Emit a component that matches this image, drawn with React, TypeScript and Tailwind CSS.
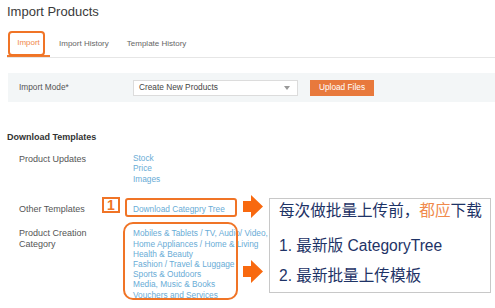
import React from "react";

const Arrow = ({ className }: { className: string }) => (
  <svg className={className} width="20" height="23" viewBox="0 0 20 23">
    <path d="M0 6 H8 V0 L20 11.5 L8 23 V17 H0 Z" fill="#f8690f" />
  </svg>
);

export default function App() {
  const cats = [
    "Mobiles & Tablets / TV, Audio/ Video, Cameras",
    "Home Appliances / Home & Living",
    "Health & Beauty",
    "Fashion / Travel & Luggage",
    "Sports & Outdoors",
    "Media, Music & Books",
    "Vouchers and Services",
  ];
  return (
    <div className="relative w-[495px] h-[308px] overflow-hidden bg-white font-['Liberation_Sans',Arial,sans-serif] text-[#555]">
      <div className="pt-[4px] pl-[7px] text-[13px] leading-[16px] text-[#3a3a3a]">Import Products</div>

      {/* tabs */}
      <div className="ml-[7px] mt-[11px] flex h-[27px] items-stretch border-b border-[#e6e6e6] text-[8px] text-[#666]">
        <div className="flex w-[43px] items-center justify-center border-b-2 border-[#f07b2f] text-[#f0874a]">Import</div>
        <div className="ml-[9px] flex items-center">Import History</div>
        <div className="ml-[18px] flex items-center">Template History</div>
      </div>

      {/* import mode panel */}
      <div className="ml-[8px] mt-[15px] flex h-[29px] items-center bg-[#f3f6f7] pl-[11px] text-[8.3px] text-[#555]">
        <div className="w-[114px]">Import Mode*</div>
        <div className="flex h-[16px] w-[165px] items-center justify-between border border-[#dcdcdc] bg-white pl-[5px] pr-[7px] text-[#444]">
          <span>Create New Products</span>
          <svg width="6" height="4" viewBox="0 0 6 4">
            <path d="M0 0 H6 L3 4 Z" fill="#999" />
          </svg>
        </div>
        <div className="ml-[12px] flex h-[16px] w-[64px] items-center justify-center bg-[#e8793c] text-white">Upload Files</div>
      </div>

      {/* download templates */}
      <div className="ml-[7px] mt-[29.5px] text-[9px] font-bold leading-[11px] text-[#333]">Download Templates</div>

      <div className="ml-[19px] text-[9px] leading-[11px]">
        <div className="mt-[10px] flex">
          <div className="w-[114px] pt-[1.5px]">Product Updates</div>
          <div className="flex flex-col text-[8.3px] leading-[10.5px] text-[#69acd6]">
            <span>Stock</span>
            <span>Price</span>
            <span>Images</span>
          </div>
        </div>
        <div className="mt-[19.5px] flex items-center">
          <div className="w-[114px]">Other Templates</div>
          <div className="text-[8.3px] leading-[10.2px] text-[#69acd6]">Download Categpry Tree</div>
        </div>
        <div className="mt-[13.8px] flex">
          <div className="w-[114px]">
            Product Creation
            <br />
            Category
          </div>
          <div className="flex flex-col whitespace-nowrap text-[8.3px] leading-[10.2px] text-[#69acd6]">
            {cats.map((c) => (
              <span key={c}>{c}</span>
            ))}
          </div>
        </div>
      </div>

      {/* annotations */}
      <div className="absolute left-[8px] top-[31px] h-[25px] w-[37px] rounded-[4px] border-2 border-[#f07426]" />
      <div className="absolute left-[102px] top-[197px] flex h-[16px] w-[18px] items-center justify-center border-2 border-[#f07426] text-[14px] font-bold leading-none text-[#f07426]">
        1
      </div>
      <div className="absolute left-[125px] top-[198px] h-[19px] w-[112px] rounded-[3px] border-2 border-[#f07426]" />
      <div className="absolute left-[123px] top-[222px] h-[78px] w-[115px] rounded-[10px] border-2 border-[#f07426]" />
      <Arrow className="absolute left-[243px] top-[195px]" />
      <Arrow className="absolute left-[243px] top-[260px]" />

      <div className="absolute left-[269px] top-[198px] flex h-[95px] w-[222px] flex-col border border-[#c8c8c8] bg-white pl-[9px] text-[15.6px] leading-[20px] text-[#1e3366] font-['Liberation_Sans','Noto_Sans_CJK_SC',sans-serif]">
        <div className="mt-[2px]">
          每次做批量上传前，<span className="text-[#f08a4c]">都应</span>下载
        </div>
        <div className="mt-[14.5px]">1. 最新版 CategoryTree</div>
        <div className="mt-[10.5px]">2. 最新批量上传模板</div>
      </div>
    </div>
  );
}
